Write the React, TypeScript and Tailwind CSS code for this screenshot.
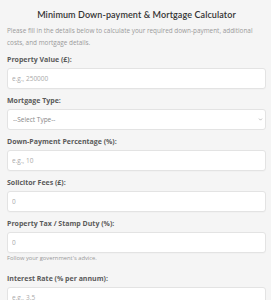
import { ChevronDown } from 'lucide-react';

// Minimum down-payment & mortgage calculator form

type Field = {
  id: string;
  label: string;
  placeholder: string;
  help?: string;
};

const FIELDS_BEFORE: Field[] = [{ id: 'value', label: 'Property Value (£):', placeholder: 'e.g., 250000' }];

const FIELDS_AFTER: Field[] = [
  { id: 'down', label: 'Down-Payment Percentage (%):', placeholder: 'e.g., 10' },
  { id: 'solicitor', label: 'Solicitor Fees (£):', placeholder: '0' },
  {
    id: 'tax',
    label: 'Property Tax / Stamp Duty (%):',
    placeholder: '0',
    help: "Follow your government's advice.",
  },
  { id: 'rate', label: 'Interest Rate (% per annum):', placeholder: 'e.g., 3.5' },
];

const inputCls =
  'block w-full h-[21px] rounded-[3px] border border-[#e3e3e3] bg-white pl-[4px] text-[6.5px] text-[#555] placeholder:text-[#aaa] outline-none shadow-[0_1px_1px_rgba(0,0,0,0.02)]';

function FieldRow({ f }: { f: Field }) {
  return (
    <div className={f.help ? 'mb-[10px]' : 'mb-[6px]'}>
      <label htmlFor={f.id} className="block text-[7px] leading-[12px] font-bold text-[#5a5a5a] mb-[2px]">
        {f.label}
      </label>
      <input id={f.id} type="text" placeholder={f.placeholder} className={inputCls} />
      {f.help && <p className="mt-0 text-[5.8px] leading-[10px] text-[#999]">{f.help}</p>}
    </div>
  );
}

export default function App() {
  return (
    <div className="min-h-screen bg-[#f5f5f5] pl-[7px] pr-[5px] pt-[8px] font-['Open_Sans',sans-serif]">
      <h1 className="text-center text-[9px] leading-[13px] font-semibold text-[#333] font-['Lato',sans-serif] tracking-[0.1px]">
        Minimum Down-payment &amp; Mortgage Calculator
      </h1>
      <p className="mt-[4px] text-[6.4px] leading-[12px] text-[#9a9a9a]">
        Please fill in the details below to calculate your required down-payment, additional costs, and mortgage
        details.
      </p>

      <form className="mt-[5px]">
        {FIELDS_BEFORE.map((f) => (
          <FieldRow key={f.id} f={f} />
        ))}

        <div className="mb-[6px]">
          <label htmlFor="type" className="block text-[7px] leading-[12px] font-bold text-[#5a5a5a] mb-[2px]">
            Mortgage Type:
          </label>
          <div className="relative">
            <select
              id="type"
              defaultValue=""
              className="block w-full h-[21px] appearance-none rounded-[3px] border border-[#e3e3e3] bg-white pl-[5px] text-[6.5px] text-[#888] outline-none"
            >
              <option value="">--Select Type--</option>
              <option value="repayment">Repayment</option>
              <option value="interest">Interest Only</option>
            </select>
            <ChevronDown className="absolute right-[3px] top-[8px] h-[5px] w-[5px] text-[#999] pointer-events-none" strokeWidth={3} />
          </div>
        </div>

        {FIELDS_AFTER.map((f) => (
          <FieldRow key={f.id} f={f} />
        ))}
      </form>
    </div>
  );
}
